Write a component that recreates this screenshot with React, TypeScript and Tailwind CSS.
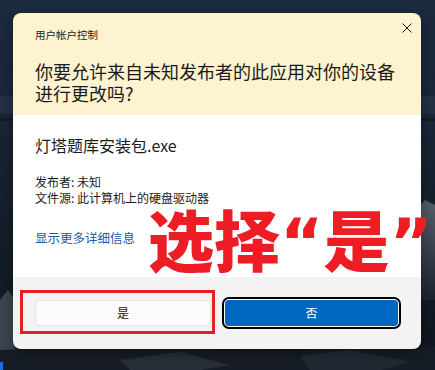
import React from "react";

const cjk = { fontFamily: '"Noto Sans CJK SC", "Noto Sans", sans-serif' };

function Wallpaper() {
  return (
    <svg className="absolute inset-0" width="435" height="370" viewBox="0 0 435 370">
      <defs>
        <linearGradient id="sky" x1="0" y1="0" x2="0" y2="1">
          <stop offset="0" stopColor="#1c2b3f" />
          <stop offset="0.3" stopColor="#1a2738" />
          <stop offset="0.6" stopColor="#151f2b" />
          <stop offset="1" stopColor="#10161e" />
        </linearGradient>
        <linearGradient id="mt" x1="0" y1="0" x2="0" y2="1">
          <stop offset="0" stopColor="#56606b" />
          <stop offset="1" stopColor="#1c242e" />
        </linearGradient>
      </defs>
      <rect width="435" height="370" fill="url(#sky)" />
      <rect x="0" y="96" width="435" height="18" fill="#2c3b4d" opacity="0.55" />
      <rect x="0" y="118" width="435" height="3" fill="#121a24" opacity="0.7" />
      <path d="M395 260 L412 215 L425 200 L435 205 L435 300 L395 300 Z" fill="url(#mt)" />
      <path d="M0 300 L8 290 L15 300 L15 370 L0 370 Z" fill="#3b4550" />
      <path d="M0 350 L120 345 L250 352 L435 346 L435 370 L0 370 Z" fill="#161d26" />
      <path d="M120 360 L180 352 L230 365 L200 370 L130 370 Z" fill="#2f3842" opacity="0.7" />
      <path d="M300 356 L350 350 L410 362 L380 370 L310 370 Z" fill="#27303a" opacity="0.7" />
      <path d="M0 362 L3 362 L3 370 L0 370 Z" fill="#1f6fd6" />
    </svg>
  );
}

export default function App() {
  return (
    <div className="relative w-[435px] h-[370px] overflow-hidden" style={cjk}>
      <Wallpaper />
      <div className="relative pt-[13px] pl-[13px]">
        <div className="relative w-[408px] h-[336px] rounded-[8px] overflow-hidden flex flex-col shadow-[0_4px_16px_rgba(0,0,0,0.35)]">
          {/* header */}
          <div className="relative h-[102px] bg-[#fdf3d0] pl-[22px] pr-[20px] pt-[14px]">
            <div className="text-[10.5px] leading-[16px] text-[#1b1b1b]">用户帐户控制</div>
            <div className="mt-[17px] text-[18px] leading-[22px] text-[#1b1b1b]">
              你要允许来自未知发布者的此应用对你的设备
              <br />
              进行更改吗?
            </div>
            <svg className="absolute right-[9px] top-[10px]" width="10" height="10" viewBox="0 0 10 10">
              <path d="M0.5 0.5 L9.5 9.5 M9.5 0.5 L0.5 9.5" stroke="#1b1b1b" strokeWidth="1" />
            </svg>
          </div>
          {/* body */}
          <div className="h-[162px] bg-white pl-[22px] pt-[19px] text-[#1b1b1b]">
            <div className="text-[16px] leading-[22px]">灯塔题库安装包.exe</div>
            <div className="mt-[18px] text-[12px] leading-[16px]">发布者: 未知</div>
            <div className="text-[12px] leading-[16px]">文件源: 此计算机上的硬盘驱动器</div>
            <div className="mt-[24px] text-[12.5px] leading-[16px] text-[#1a5aa8]">显示更多详细信息</div>
          </div>
          {/* footer */}
          <div className="flex-1 bg-[#f3f3f3] flex items-center pl-[22px] gap-[11px]">
            <div className="w-[176px] h-[26px] rounded-[4px] bg-[#fbfbfb] border border-[#e3e3e3] flex items-center justify-center text-[12px] text-[#1b1b1b]">
              是
            </div>
            <div className="w-[179px] h-[32px] rounded-[7px] border-2 border-black bg-white p-[1px]">
              <div className="w-full h-full rounded-[4px] bg-[#0067c0] flex items-center justify-center text-[12px] text-white">
                否
              </div>
            </div>
          </div>
        </div>
      </div>
      {/* overlays */}
      <div className="absolute left-[148px] top-[204px] text-[66px] leading-none font-black text-[#ee1c25] whitespace-nowrap">
        选择<span className="font-['DejaVu_Sans'] font-bold">“</span>是<span className="font-['DejaVu_Sans'] font-bold">”</span>
      </div>
      <div className="absolute left-[20px] top-[290px] w-[195px] h-[44px] border-[3px] border-[#e81d25]" />
    </div>
  );
}
